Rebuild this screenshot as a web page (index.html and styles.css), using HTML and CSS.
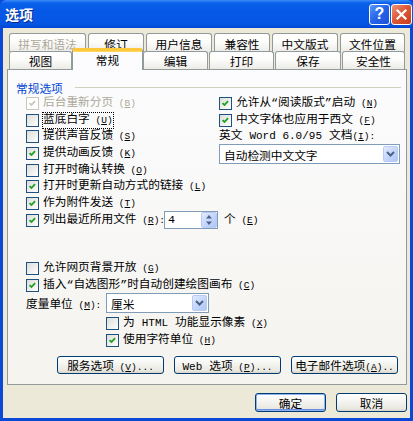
FILE: index.html
```html
<!DOCTYPE html>
<html>
<head>
    <meta charset="utf-8">
    <title>选项</title>
    <link rel="stylesheet" href="styles.css">
</head>
<body>
    <div class="window">
        <div class="titlebar">
            <span class="title">选项</span>
            <div class="title-buttons">
                <span class="tb-btn help">?</span>
                <span class="tb-btn close">
                    <svg width="13" height="13" viewBox="0 0 13 13"><path d="M2.5 2.5 L10.5 10.5 M10.5 2.5 L2.5 10.5" stroke="#fff" stroke-width="2.2" stroke-linecap="square"/></svg>
                </span>
            </div>
        </div>
        <div class="client">
            <div class="tabs">
                <div class="tab-row back">
                    <div class="tab disabled">拼写和语法</div>
                    <div class="tab">修订</div>
                    <div class="tab">用户信息</div>
                    <div class="tab">兼容性</div>
                    <div class="tab">中文版式</div>
                    <div class="tab">文件位置</div>
                </div>
                <div class="tab-row front">
                    <div class="tab">视图</div>
                    <div class="tab active">常规</div>
                    <div class="tab">编辑</div>
                    <div class="tab">打印</div>
                    <div class="tab">保存</div>
                    <div class="tab">安全性</div>
                </div>
            </div>

            <div class="panel">
                <div class="group-title"><span>常规选项</span><span class="rule"></span></div>

                <div class="columns">
                    <div class="col-left">
                        <div class="row disabled"><span class="box checked"><svg viewBox="0 0 13 13"><polyline points="3,6 5.3,8.3 9.5,3.8"/></svg></span><span>后台重新分页<span class="k"> (<u>B</u>)</span></span></div>
                        <div class="row"><span class="box"></span><span class="focus">蓝底白字<span class="k"> (<u>U</u>)</span></span></div>
                        <div class="row"><span class="box"></span><span>提供声音反馈<span class="k"> (<u>S</u>)</span></span></div>
                        <div class="row"><span class="box checked"><svg viewBox="0 0 13 13"><polyline points="3,6 5.3,8.3 9.5,3.8"/></svg></span><span>提供动画反馈<span class="k"> (<u>K</u>)</span></span></div>
                        <div class="row"><span class="box"></span><span>打开时确认转换<span class="k"> (<u>O</u>)</span></span></div>
                        <div class="row"><span class="box checked"><svg viewBox="0 0 13 13"><polyline points="3,6 5.3,8.3 9.5,3.8"/></svg></span><span>打开时更新自动方式的链接<span class="k"> (<u>L</u>)</span></span></div>
                        <div class="row"><span class="box checked"><svg viewBox="0 0 13 13"><polyline points="3,6 5.3,8.3 9.5,3.8"/></svg></span><span>作为附件发送<span class="k"> (<u>T</u>)</span></span></div>
                    </div>
                    <div class="col-right">
                        <div class="row"><span class="box checked"><svg viewBox="0 0 13 13"><polyline points="3,6 5.3,8.3 9.5,3.8"/></svg></span><span>允许从“阅读版式”启动<span class="k"> (<u>N</u>)</span></span></div>
                        <div class="row"><span class="box checked"><svg viewBox="0 0 13 13"><polyline points="3,6 5.3,8.3 9.5,3.8"/></svg></span><span>中文字体也应用于西文<span class="k"> (<u>F</u>)</span></span></div>
                        <div class="row"><span>英文 <span class="en">Word 6.0/95</span> 文档<span class="k">(<u>I</u>):</span></span></div>
                        <div class="combo wide">
                            <span>自动检测中文文字</span>
                            <span class="drop"><svg width="9" height="6" viewBox="0 0 9 6"><polyline points="1,1 4.5,4.5 8,1"/></svg></span>
                        </div>
                    </div>
                </div>

                <div class="row spin-row">
                    <span class="box checked"><svg viewBox="0 0 13 13"><polyline points="3,6 5.3,8.3 9.5,3.8"/></svg></span>
                    <span class="spin-label">列出最近所用文件<span class="k"> (<u>R</u>):</span></span>
                    <div class="spin">
                        <span>4</span>
                        <span class="spin-btn"><svg width="8" height="12" viewBox="0 0 8 12"><polygon points="4,1 7,4.5 1,4.5"/><polygon points="1,7.5 7,7.5 4,11"/></svg></span>
                    </div>
                    <span class="unit">个<span class="k"> (<u>E</u>)</span></span>
                </div>

                <div class="lower">
                    <div class="row"><span class="box"></span><span>允许网页背景开放<span class="k"> (<u>G</u>)</span></span></div>
                    <div class="row"><span class="box checked"><svg viewBox="0 0 13 13"><polyline points="3,6 5.3,8.3 9.5,3.8"/></svg></span><span>插入“自选图形”时自动创建绘图画布<span class="k"> (<u>C</u>)</span></span></div>
                    <div class="measure-row">
                        <span class="measure-label">度量单位<span class="k"> (<u>M</u>):</span></span>
                        <div class="combo small">
                            <span>厘米</span>
                            <span class="drop"><svg width="9" height="6" viewBox="0 0 9 6"><polyline points="1,1 4.5,4.5 8,1"/></svg></span>
                        </div>
                    </div>
                    <div class="indent">
                        <div class="row"><span class="box"></span><span>为 <span class="en">HTML</span> 功能显示像素<span class="k"> (<u>X</u>)</span></span></div>
                        <div class="row"><span class="box checked"><svg viewBox="0 0 13 13"><polyline points="3,6 5.3,8.3 9.5,3.8"/></svg></span><span>使用字符单位<span class="k"> (<u>H</u>)</span></span></div>
                    </div>
                </div>

                <div class="panel-buttons">
                    <button class="btn"><span>服务选项<span class="k"> (<u>V</u>)...</span></span></button>
                    <button class="btn"><span><span class="en">Web</span> 选项<span class="k"> (<u>P</u>)...</span></span></button>
                    <button class="btn"><span>电子邮件选项<span class="k">(<u>A</u>)..</span></span></button>
                </div>
            </div>

            <div class="dialog-buttons">
                <button class="btn default">确定</button>
                <button class="btn">取消</button>
            </div>
        </div>
    </div>
</body>
</html>
```

FILE: styles.css
```css
body {
    margin: 0;
    font-family: "Liberation Mono", "Noto Sans CJK SC", monospace;
    font-size: 11.7px;
    color: #000;
    background: #fff;
}
.window {
    width: 413px;
    height: 421px;
    box-sizing: border-box;
    background: #0a48d6;
    display: flex;
    flex-direction: column;
}
.titlebar {
    height: 28px;
    flex: none;
    display: flex;
    align-items: center;
    padding: 0 1px 0 5px;
    background: linear-gradient(#3b8cf8 0, #0a60ea 3px, #0558e6 40%, #0555e3 85%, #0346d2 100%);
    border-radius: 6px 6px 0 0;
}
.title {
    font-family: "Noto Sans CJK SC", sans-serif;
    font-size: 14px;
    font-weight: bold;
    color: #fff;
    text-shadow: 1px 1px 0 #0a2a8a;
    flex: 1;
}
.title-buttons {
    display: flex;
    gap: 1px;
}
.tb-btn {
    width: 21px;
    height: 21px;
    box-sizing: border-box;
    border: 1px solid #fff;
    border-radius: 3px;
    display: flex;
    align-items: center;
    justify-content: center;
}
.help {
    background: linear-gradient(135deg, #5b95f8, #2663e8 50%, #1c52d8);
    color: #fff;
    font-family: "Liberation Sans", sans-serif;
    font-weight: bold;
    font-size: 16px;
}
.close {
    background: linear-gradient(135deg, #f0957a, #dc5a38 45%, #c53c1c);
}
.client {
    flex: 1;
    margin: 0 3px 3px 3px;
    background: #ece9d8;
    display: flex;
    flex-direction: column;
}

/* tabs */
.tabs {
    margin-top: 5px;
    padding-left: 6px;
}
.tab-row {
    display: flex;
}
.tab-row.back {
    height: 19px;
    gap: 2px;
}
.tab-row.front {
    height: 18px;
    margin-top: -1px;
}
.tab {
    box-sizing: border-box;
    border: 1px solid #919b9c;
    border-bottom: none;
    border-radius: 3px 3px 0 0;
    background: linear-gradient(#fff, #fcfcfb 45%, #ecebe6);
    display: flex;
    align-items: center;
    justify-content: center;
    font-family: "Noto Sans CJK SC", sans-serif;
    height: 100%;
}
.tab.disabled {
    color: #aca899;
}
.back .tab:nth-child(1) { width: 77px; }
.back .tab:nth-child(2) { width: 56px; }
.back .tab:nth-child(3) { width: 66px; }
.back .tab:nth-child(4) { width: 56px; }
.back .tab:nth-child(5) { width: 66px; }
.back .tab:nth-child(6) { width: 65px; }
.front .tab:nth-child(1) { width: 63px; }
.front .tab:nth-child(2) { width: 71px; }
.front .tab:nth-child(3) { width: 65px; }
.front .tab:nth-child(4) { width: 65px; margin-left: 1px; }
.front .tab:nth-child(5) { width: 66px; margin-left: 1px; }
.front .tab:nth-child(6) { width: 63px; margin-left: 1px; }
.tab.active {
    height: 22px;
    margin-top: -3px;
    position: relative;
    z-index: 1;
    background: #fcfcfe;
    border-top: 3px solid #ffc73c;
    box-shadow: inset 0 1px 0 #ffd65e;
    padding-bottom: 2px;
}

/* panel */
.panel {
    margin-left: 4px;
    width: 400px;
    height: 316px;
    box-sizing: border-box;
    border: 1px solid #919b9c;
    background: linear-gradient(#fcfcfe, #f4f3ee);
    display: flex;
    flex-direction: column;
}
.group-title {
    margin-top: 10px;
    height: 15px;
    padding-left: 8px;
    display: flex;
    align-items: center;
    color: #0046d5;
    font-family: "Noto Sans CJK SC", sans-serif;
}
.rule {
    flex: 1;
    border-top: 1px solid #d0d0bf;
    margin: 0 5px 0 12px;
}
.columns {
    display: flex;
    padding-left: 18px;
}
.col-left {
    width: 193px;
}
.col-right {
    width: 181px;
}
.row {
    height: 16.7px;
    display: flex;
    align-items: center;
    white-space: nowrap;
    line-height: 14px;
}
.row.disabled {
    color: #aca899;
}
.box {
    width: 13px;
    height: 13px;
    flex: none;
    box-sizing: border-box;
    border: 1px solid #1c5180;
    background: linear-gradient(135deg, #dcdcd7, #fff);
    margin-right: 4px;
    display: flex;
}
.box svg {
    width: 11px;
    height: 11px;
}
.box polyline {
    fill: none;
    stroke: #21a121;
    stroke-width: 2.2;
}
.disabled .box {
    border-color: #cac8bb;
    background: #fff;
}
.disabled .box polyline {
    stroke: #cac8bb;
}
.k {
    font-size: 9.5px;
}
.en {
    font-size: 11px;
}
.focus {
    outline: 1px dotted #000;
    outline-offset: 0;
}

/* combo and spinner */
.combo {
    box-sizing: border-box;
    border: 1px solid #7f9db9;
    background: #fff;
    display: flex;
    align-items: center;
    padding-left: 4px;
    height: 20px;
    font-family: "Noto Sans CJK SC", sans-serif;
}
.combo.wide {
    width: 181px;
    margin-top: -1px;
}
.combo.small {
    width: 103px;
}
.drop {
    width: 15px;
    height: 16px;
    margin-left: auto;
    margin-right: 1px;
    box-sizing: border-box;
    border: 1px solid #b9cbf3;
    border-radius: 2px;
    background: linear-gradient(135deg, #e2ebfe, #c0d3fb 60%, #b0c6f6);
    display: flex;
    align-items: center;
    justify-content: center;
}
.drop polyline {
    fill: none;
    stroke: #4d6185;
    stroke-width: 2;
}
.spin-row {
    padding-left: 18px;
}
.spin-label {
    width: 121px;
}
.spin {
    width: 54px;
    height: 18px;
    box-sizing: border-box;
    border: 1px solid #7f9db9;
    background: #fff;
    display: flex;
    align-items: center;
    padding-left: 3px;
    flex: none;
}
.spin-btn {
    width: 16px;
    height: 16px;
    margin-left: auto;
    box-sizing: border-box;
    border: 1px solid #b9cbf3;
    border-radius: 2px;
    background: linear-gradient(135deg, #e2ebfe, #c0d3fb 60%, #b0c6f6);
    display: flex;
    align-items: center;
    justify-content: center;
}
.spin-btn polygon {
    fill: #4d6185;
}
.unit {
    margin-left: 6px;
}
.lower {
    margin-top: 31.5px;
    padding-left: 18px;
}
.measure-row {
    height: 20px;
    display: flex;
    align-items: center;
    white-space: nowrap;
}
.measure-label {
    width: 80px;
}
.indent {
    margin-top: 2px;
    padding-left: 80px;
}

/* buttons */
.btn {
    box-sizing: border-box;
    border: 1px solid #003c74;
    border-radius: 3px;
    background: linear-gradient(#fff, #f4f4f0 45%, #e9e8e1 85%, #d8d3c8);
    font-family: "Liberation Mono", "Noto Sans CJK SC", monospace;
    font-size: 11.7px;
    color: #000;
    padding: 0;
    display: flex;
    align-items: center;
    justify-content: center;
    white-space: nowrap;
    overflow: hidden;
}
.panel-buttons {
    display: flex;
    gap: 10px;
    margin-top: 7px;
    padding-left: 49px;
}
.panel-buttons .btn {
    width: 107px;
    height: 18px;
}
.dialog-buttons {
    display: flex;
    justify-content: flex-end;
    gap: 10px;
    margin-top: 8px;
    padding-right: 3px;
}
.dialog-buttons .btn {
    width: 71px;
    height: 19px;
}
.btn.default {
    box-shadow: inset 0 0 0 1px #8db2f0, inset 0 -1px 0 1px #6a8ee8;
}
```
